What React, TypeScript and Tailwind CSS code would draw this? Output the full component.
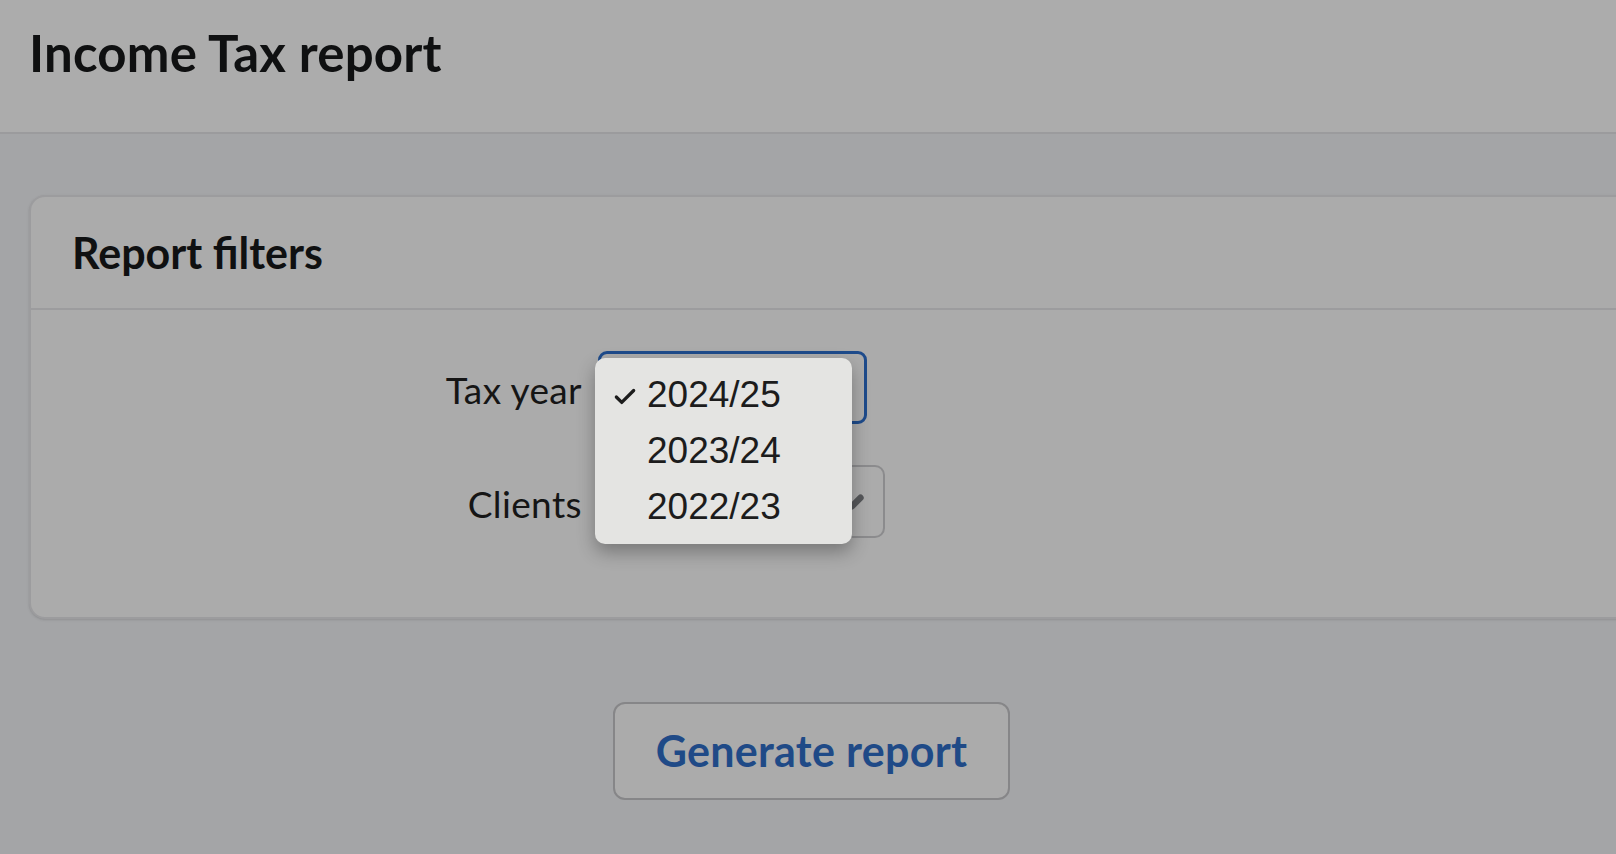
import { Check, ChevronDown } from "lucide-react";

const years = ["2024/25", "2023/24", "2022/23"];

function SelectBox({ width, focused, value, children }: { width: string; focused?: boolean; value: string; children?: React.ReactNode }) {
    return (
        <div
            className={`relative h-[73px] ${width} flex items-center pl-4 pr-[14px] bg-[#ababab] ${
                focused ? "border-[3px] border-[#1e4b8b] rounded-[9px]" : "border-2 border-[#8b8b8d] rounded-[10px]"
            }`}
        >
            <span className="flex-1 text-[37px] text-[#161616] font-['Lato',sans-serif]">{value}</span>
            <ChevronDown className="w-[34px] h-[34px] text-[#55575a]" strokeWidth={4.5} />
            {children}
        </div>
    );
}

export default function App() {
    return (
        <div className="min-h-screen w-full overflow-hidden bg-[#a4a5a7] font-['Lato',sans-serif]">
            {/* Page header */}
            <header className="h-[134px] bg-[#acacac] border-b-2 border-[#9b9b9d] px-[29px] pt-[23px]">
                <h1 className="text-[51px] leading-[60px] font-bold text-[#0f1011] tracking-[0.2px]">Income Tax report</h1>
            </header>

            {/* Filters card */}
            <div className="pl-[29px] pt-[61px]">
                <section className="w-[1640px] bg-[#ababab] border-2 border-[#9c9c9e] rounded-2xl shadow-sm">
                    <div className="h-[113px] flex items-center px-[41px] border-b-2 border-[#9c9c9e]">
                        <h2 className="text-[43px] leading-tight font-bold text-[#0f1011]">Report filters</h2>
                    </div>

                    <div className="pt-[41px] pb-[79px] flex flex-col gap-[41px]">
                        <div className="flex items-center gap-4">
                            <label className="w-[551px] text-right text-[37px] tracking-[0.4px] text-[#151515] pt-[4px]">Tax year</label>
                            <SelectBox width="w-[269px]" focused value="2024/25">
                                {/* Open native dropdown */}
                                <div className="absolute -left-[6px] top-[4px] z-10 w-[257px] py-[9px] bg-[#e4e4e2] rounded-[10px] shadow-[0_8px_18px_rgba(0,0,0,0.3)] font-['Liberation_Sans',sans-serif]">
                                    {years.map((y, i) => (
                                        <div key={y} className="h-[56px] flex items-center text-[37px] text-[#1c1c1c]">
                                            <span className="w-[52px] flex justify-end pr-[9px] pt-[4px]">
                                                {i === 0 && <Check className="w-[26px] h-[26px] text-[#1c1c1c]" strokeWidth={3} />}
                                            </span>
                                            <span>{y}</span>
                                        </div>
                                    ))}
                                </div>
                            </SelectBox>
                        </div>
                        <div className="flex items-center gap-4">
                            <label className="w-[551px] text-right text-[37px] tracking-[0.4px] text-[#151515] pt-[4px]">Clients</label>
                            <SelectBox width="w-[287px]" value="All clients" />
                        </div>
                    </div>
                </section>
            </div>

            {/* Action */}
            <div className="flex justify-center pl-[7px] pt-[83px]">
                <button className="w-[397px] h-[98px] rounded-xl border-2 border-[#868688] bg-[#ababab] text-[43px] font-bold text-[#1f4a87] tracking-[0.3px]">
                    Generate report
                </button>
            </div>
        </div>
    );
}
